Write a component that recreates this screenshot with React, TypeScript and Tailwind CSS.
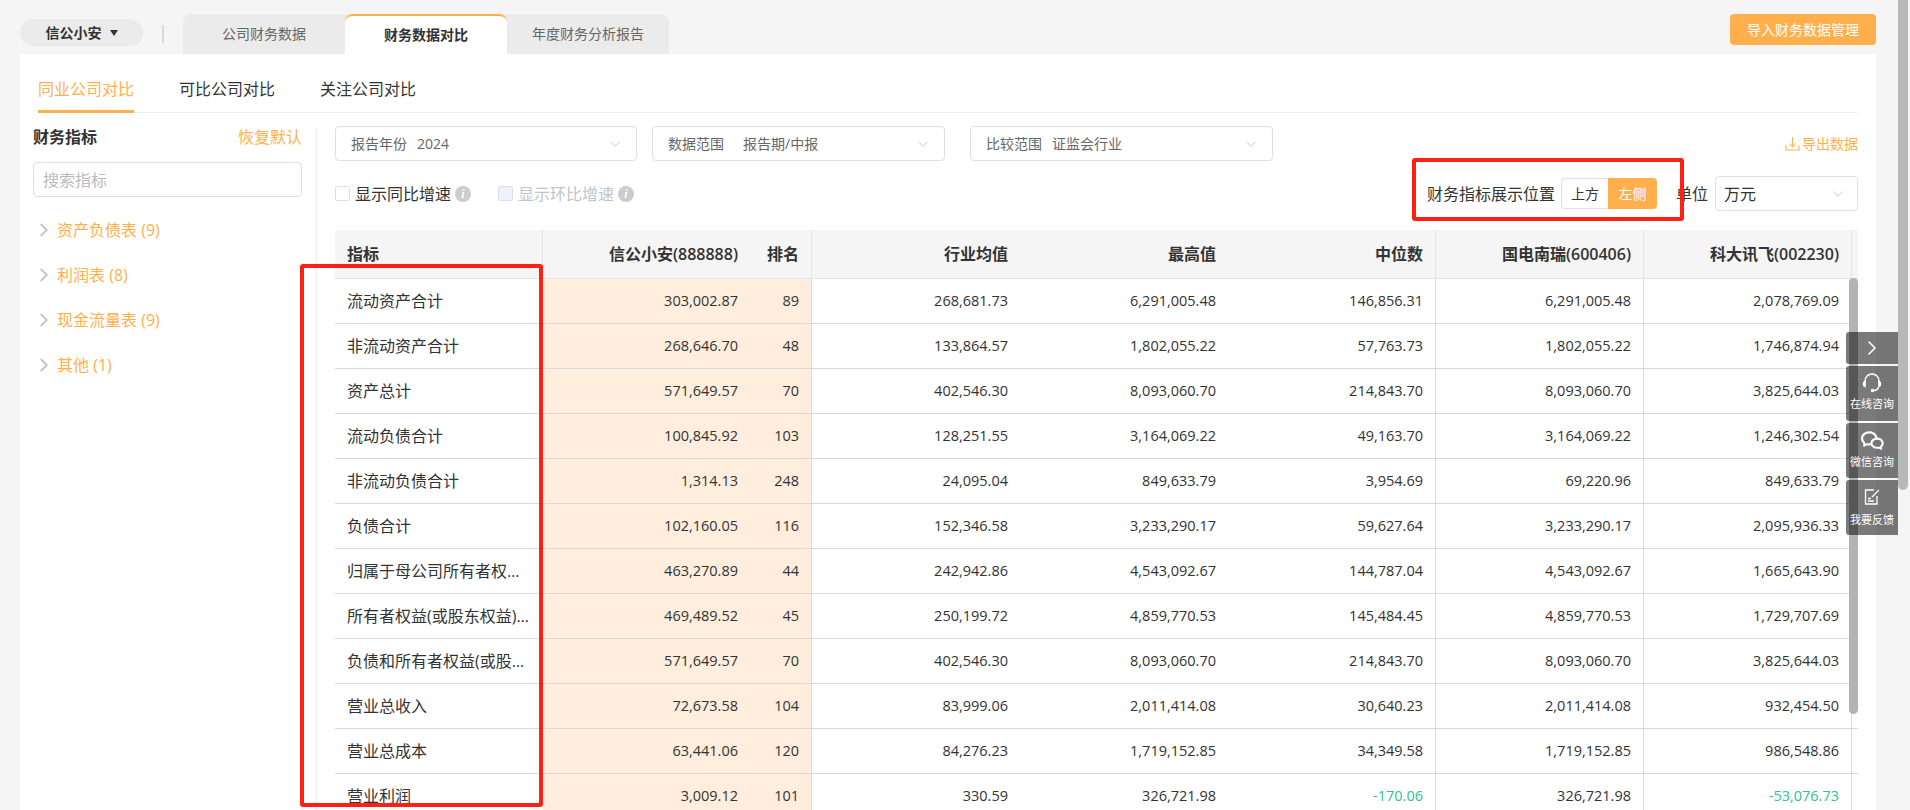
import { ChevronDown, ChevronRight } from "lucide-react";
import { RiWechatLine } from "react-icons/ri";

const font = "[font-family:'Open_Sans','Noto_Sans_CJK_SC',sans-serif]";

interface Row {
  name: string;
  values: string[];
}

const rows: Row[] = [
  { name: "流动资产合计", values: ["303,002.87", "89", "268,681.73", "6,291,005.48", "146,856.31", "6,291,005.48", "2,078,769.09"] },
  { name: "非流动资产合计", values: ["268,646.70", "48", "133,864.57", "1,802,055.22", "57,763.73", "1,802,055.22", "1,746,874.94"] },
  { name: "资产总计", values: ["571,649.57", "70", "402,546.30", "8,093,060.70", "214,843.70", "8,093,060.70", "3,825,644.03"] },
  { name: "流动负债合计", values: ["100,845.92", "103", "128,251.55", "3,164,069.22", "49,163.70", "3,164,069.22", "1,246,302.54"] },
  { name: "非流动负债合计", values: ["1,314.13", "248", "24,095.04", "849,633.79", "3,954.69", "69,220.96", "849,633.79"] },
  { name: "负债合计", values: ["102,160.05", "116", "152,346.58", "3,233,290.17", "59,627.64", "3,233,290.17", "2,095,936.33"] },
  { name: "归属于母公司所有者权益合计", values: ["463,270.89", "44", "242,942.86", "4,543,092.67", "144,787.04", "4,543,092.67", "1,665,643.90"] },
  { name: "所有者权益(或股东权益)合计", values: ["469,489.52", "45", "250,199.72", "4,859,770.53", "145,484.45", "4,859,770.53", "1,729,707.69"] },
  { name: "负债和所有者权益(或股东权益)总计", values: ["571,649.57", "70", "402,546.30", "8,093,060.70", "214,843.70", "8,093,060.70", "3,825,644.03"] },
  { name: "营业总收入", values: ["72,673.58", "104", "83,999.06", "2,011,414.08", "30,640.23", "2,011,414.08", "932,454.50"] },
  { name: "营业总成本", values: ["63,441.06", "120", "84,276.23", "1,719,152.85", "34,349.58", "1,719,152.85", "986,548.86"] },
  { name: "营业利润", values: ["3,009.12", "101", "330.59", "326,721.98", "-170.06", "326,721.98", "-53,076.73"] },
];

const groups = ["资产负债表 (9)", "利润表 (8)", "现金流量表 (9)", "其他 (1)"];

// column right borders, index matches the values array
const cellBorder = ["", "border-r", "", "", "border-r", "border-r", "border-r"];

function Select({ label, value, className }: { label: string; value: string; className: string }) {
  return (
    <div className={`flex h-[35px] items-center rounded border border-[#dcdfe6] pl-[15px] pr-3 text-sm text-[#666] ${className}`}>
      <span>{label}</span>
      <span className="ml-auto flex-1 truncate">{value}</span>
      <ChevronDown className="size-[18px] text-[#c0c4cc]" strokeWidth={1.2} />
    </div>
  );
}

function InfoDot() {
  return (
    <span className="ml-1 flex size-4 items-center justify-center rounded-full bg-[#ccc] text-xs font-bold italic leading-none text-white [font-family:'Liberation_Serif',serif]">
      i
    </span>
  );
}

function SideItem({ children, label, className }: { children: React.ReactNode; label: string; className: string }) {
  return (
    <div className={`flex w-[52px] flex-col items-center rounded-l-[3px] bg-[rgba(0,0,0,0.52)] text-white ${className}`}>
      {children}
      <span className="text-[11px] leading-[14px]">{label}</span>
    </div>
  );
}

export default function App() {
  return (
    <div className={`relative h-[810px] w-full overflow-hidden bg-[#f5f5f5] pl-5 pr-[34px] text-[#333] ${font}`}>
      {/* top bar */}
      <div className="flex h-[54px] items-end">
        <div className="mb-2 flex h-[27px] w-[123px] items-center justify-center gap-2 rounded-full bg-[#ebebeb] text-sm font-semibold">
          信公小安
          <span className="h-0 w-0 border-x-[4px] border-t-[6px] border-x-transparent border-t-[#333]" />
        </div>
        <div className="mb-[11px] ml-[19px] h-[18px] w-0.5 bg-[#d9d9d9]" />
        <div className="ml-[19px] flex h-10 w-[486px] rounded-t-lg bg-[#ebebeb] text-sm text-[#666]">
          <div className="flex w-[162px] items-center justify-center">公司财务数据</div>
          <div className="flex w-[162px] items-center justify-center rounded-t-lg border-t-2 border-[#ffb04c] bg-white font-semibold text-[#333]">财务数据对比</div>
          <div className="flex w-[162px] items-center justify-center">年度财务分析报告</div>
        </div>
        <button className="mb-[9px] ml-auto h-[31px] w-[146px] rounded bg-[#ffb04c] text-sm text-white">导入财务数据管理</button>
      </div>

      {/* panel */}
      <div className="h-[756px] bg-white pl-[13px] pr-[18px]">
        <div className="ml-[5px] flex h-[59px] gap-[45px] border-b border-[#ebeef5] text-base">
          <div className="flex h-[59px] items-center border-b-[3px] border-[#ffb04c] pt-[13px] text-[#ffb04c]">同业公司对比</div>
          <div className="flex h-[59px] items-center border-b-[3px] border-transparent pt-[13px]">可比公司对比</div>
          <div className="flex h-[59px] items-center border-b-[3px] border-transparent pt-[13px]">关注公司对比</div>
        </div>

        <div className="flex">
          {/* sidebar */}
          <div className="mt-[13px] w-[284px] shrink-0 border-r border-[#ebeef5] pr-[14px]">
            <div className="flex h-[21px] items-center justify-between text-base">
              <span className="font-semibold">财务指标</span>
              <span className="text-[#ffb04c]">恢复默认</span>
            </div>
            <div className="mt-[15px] flex h-[35px] items-center rounded border border-[#dcdfe6] pl-[9px] text-base text-[#bbb]">搜索指标</div>
            <div className="mt-[10px]">
              {groups.map((g) => (
                <div key={g} className="flex h-[45px] items-center text-base text-[#ffb04c]">
                  <ChevronRight className="ml-[0px] mr-[2px] size-[22px] text-[#c0c4cc]" strokeWidth={2} />
                  <span>{g}</span>
                </div>
              ))}
            </div>
          </div>

          {/* main */}
          <div className="relative min-w-0 flex-1 pl-[18px] pt-[13px]">
            <div className="flex items-center">
              <Select label="报告年份" value="2024" className="w-[302px] [&>span:nth-child(2)]:ml-[10px]" />
              <Select label="数据范围" value="报告期/中报" className="ml-[15px] w-[293px] [&>span:nth-child(2)]:ml-[19px]" />
              <Select label="比较范围" value="证监会行业" className="ml-[25px] w-[303px] [&>span:nth-child(2)]:ml-[10px]" />
              <div className="ml-auto flex items-center gap-[2px] text-sm text-[#ffb04c]">
                <svg viewBox="0 0 16 16" className="size-[15px]" fill="none" stroke="currentColor" strokeWidth="1.1">
                  <path d="M1 9.5V15H15V9.5M8 1V11.5M4.5 8L8 11.5L11.5 8" />
                </svg>
                导出数据
              </div>
            </div>

            <div className="mt-[15px] flex h-[35px] items-center text-base">
              <span className="size-[15px] rounded-[2px] border border-[#dcdfe6]" />
              <span className="ml-[5px]">显示同比增速</span>
              <InfoDot />
              <span className="ml-[27px] size-[15px] rounded-[2px] border border-[#dcdfe6] bg-[#edf2fc]" />
              <span className="ml-[5px] text-[#c0c4cc]">显示环比增速</span>
              <InfoDot />
              <span className="ml-auto">财务指标展示位置</span>
              <div className="ml-[6px] flex h-[31px] w-[96px] text-sm">
                <span className="flex w-[47px] items-center justify-center rounded-l border border-r-0 border-[#dcdfe6]">上方</span>
                <span className="flex w-[49px] items-center justify-center rounded-r bg-[#ffb04c] text-white">左侧</span>
              </div>
              <span className="ml-[19px]">单位</span>
              <div className="ml-[7px] flex h-[35px] w-[143px] items-center justify-between rounded border border-[#dcdfe6] pl-2 pr-[10px]">
                万元
                <ChevronDown className="size-[18px] text-[#c0c4cc]" strokeWidth={1.2} />
              </div>
            </div>

            <table className="mt-[19px] w-[1523px] table-fixed border-separate border-spacing-0 text-[14.5px]">
              <colgroup>
                <col className="w-[208px]" />
                <col className="w-[207px]" />
                <col className="w-[62px]" />
                <col className="w-[208px]" />
                <col className="w-[208px]" />
                <col className="w-[208px]" />
                <col className="w-[208px]" />
                <col className="w-[208px]" />
                <col className="w-[6px]" />
              </colgroup>
              <thead>
                <tr className="h-[49px] bg-[#f5f5f5] text-base [&>th]:border-b [&>th]:border-[#e4e4e4] [&>th]:px-3 [&>th]:font-semibold">
                  <th className="border-r border-r-[#d9d9d9] text-left">指标</th>
                  <th className="text-right">信公小安(888888)</th>
                  <th className="border-r border-r-[#d9d9d9] text-right">排名</th>
                  <th className="text-right">行业均值</th>
                  <th className="text-right">最高值</th>
                  <th className="border-r border-r-[#d9d9d9] text-right">中位数</th>
                  <th className="border-r border-r-[#d9d9d9] text-right">国电南瑞(600406)</th>
                  <th className="border-r border-r-[#d9d9d9] text-right">科大讯飞(002230)</th>
                  <th />
                </tr>
              </thead>
              <tbody>
                {rows.map((row) => (
                  <tr key={row.name} className="h-[45px] [&>td]:border-b [&>td]:border-b-[#d9d9d9]">
                    <td className="truncate px-3 text-base">{row.name}</td>
                    {row.values.map((v, i) => (
                      <td
                        key={i}
                        className={`border-r-[#d9d9d9] px-3 text-right ${cellBorder[i]} ${i < 2 ? "bg-[#ffeedd]" : ""} ${v.startsWith("-") ? "text-[#2ec28e]" : ""}`}
                      >
                        {v}
                      </td>
                    ))}
                    <td className="p-0" />
                  </tr>
                ))}
              </tbody>
            </table>
          </div>
        </div>
      </div>

      {/* table scrollbar */}
      <div className="absolute left-[1849px] top-[278px] h-[436px] w-[9px] rounded-full bg-[#b3b3b3]" />
      {/* page scrollbar */}
      <div className="absolute left-[1898px] top-0 h-[490px] w-[10px] rounded-b-full bg-[#b8b8b8]" />

      {/* floating side bar */}
      <div className="absolute left-[1846px] top-[332px] flex flex-col gap-0.5">
        <SideItem label="" className="h-[32px] justify-center">
          <ChevronRight className="size-6" strokeWidth={1.6} />
        </SideItem>
        <SideItem label="在线咨询" className="h-[55px] pt-[5px]">
          <svg viewBox="0 0 24 24" className="mb-[2px] size-[24px]" fill="none" stroke="currentColor" strokeWidth="1.4">
            <path d="M5 14V10a7 7 0 0 1 14 0v4" />
            <path d="M5 10.5a2 2 0 0 0-1.5 2v1a2 2 0 0 0 1.5 2zM19 10.5a2 2 0 0 1 1.5 2v1a2 2 0 0 1-1.5 2z" />
            <path d="M18.5 16c-.5 2.5-2.5 3.5-5 3.5" />
            <circle cx="12.5" cy="19.5" r="1" />
          </svg>
        </SideItem>
        <SideItem label="微信咨询" className="h-[55px] pt-[5px]">
          <RiWechatLine className="mb-[2px] size-[25px]" />
        </SideItem>
        <SideItem label="我要反馈" className="h-[55px] pt-[8px]">
          <svg viewBox="0 0 18 18" className="mb-[7px] size-[18px]" fill="none" stroke="currentColor" strokeWidth="1.3">
            <path d="M11 2H2.5V16H14V8" />
            <path d="M9 9L16 2" />
            <path d="M5 10.5H8M5 13H11" />
          </svg>
        </SideItem>
      </div>

      {/* red annotation boxes */}
      <div className="absolute left-[300px] top-[264px] h-[543px] w-[243px] rounded-[3px] border-4 border-[#ff1f13]" />
      <div className="absolute left-[1412px] top-[158px] h-[63px] w-[272px] rounded-[3px] border-4 border-[#ff1f13]" />
    </div>
  );
}
